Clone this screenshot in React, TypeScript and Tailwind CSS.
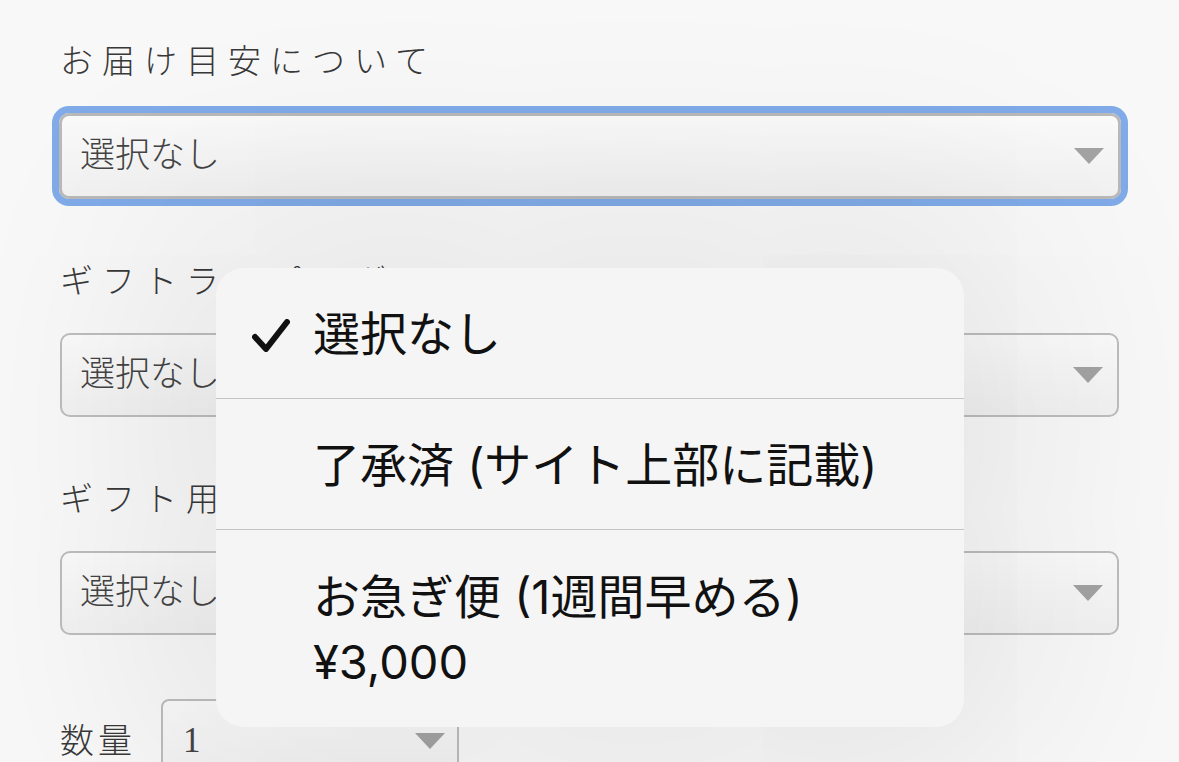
import React from 'react';

const serif = { fontFamily: '"Liberation Serif", "Noto Sans CJK JP", serif' };
const sans = { fontFamily: 'Inter, "Noto Sans CJK JP", sans-serif' };

const Arrow: React.FC = () => (
  <svg width="30" height="16" viewBox="0 0 30 16" className="shrink-0">
    <polygon points="0,0 30,0 15,16" fill="#a3a3a3" />
  </svg>
);

const SelectBox: React.FC<{ value: string; focused?: boolean; className?: string }> = ({ value, focused, className = '' }) => (
  <div
    className={`flex items-center justify-between rounded-[10px] bg-gradient-to-b from-[#fafafa] to-[#f1f1f1] pl-[18px] pr-[14px] ${
      focused ? 'h-[86px] border-[3px] border-[#b9b9b9] ring-[7px] ring-[#80abe8]' : 'h-[84px] border-2 border-[#bdbdbd]'
    } ${className}`}
  >
    <span className="text-[35px] font-light text-[#444]" style={serif}>
      {value}
    </span>
    <Arrow />
  </div>
);

const Label: React.FC<{ children: React.ReactNode }> = ({ children }) => (
  <div className="flex h-[40px] items-center text-[33px] font-light tracking-[9px] text-[#383838]" style={serif}>
    {children}
  </div>
);

export default function App() {
  const options = [
    { label: '選択なし', checked: true, h: 'h-[130px]' },
    { label: '了承済 (サイト上部に記載)', h: 'h-[131px]' },
    { label: 'お急ぎ便 (1週間早める)', sub: '¥3,000', h: 'h-[198px]' },
  ];

  return (
    <div className="relative h-[762px] w-[1179px] overflow-hidden bg-[#f8f8f8]">
      <div className="flex flex-col px-[60px] pt-[43px]">
        <Label>お届け目安について</Label>
        <SelectBox value="選択なし" focused className="mt-[30px] -ml-[1px] mr-[-2px]" />

        <div className="mt-[64px]">
          <Label>ギフトラッピング</Label>
        </div>
        <SelectBox value="選択なし" className="mt-[30px]" />

        <div className="mt-[64px]">
          <Label>ギフト用紙袋</Label>
        </div>
        <SelectBox value="選択なし" className="mt-[30px]" />

        <div className="mt-[64px] flex items-center gap-[25px]">
          <span className="text-[34px] font-light tracking-[4px] text-[#383838]" style={serif}>
            数量
          </span>
          <div className="flex h-[84px] w-[298px] items-center justify-between rounded-[8px] border-2 border-[#bdbdbd] bg-gradient-to-b from-[#fafafa] to-[#f1f1f1] pl-[20px] pr-[12px]">
            <span className="text-[35px] text-[#444]" style={serif}>
              1
            </span>
            <Arrow />
          </div>
        </div>
      </div>

      {/* popup menu */}
      <div
        className="absolute left-[216px] top-[268px] flex w-[748px] flex-col overflow-hidden rounded-[28px] bg-[#f5f5f5] shadow-[0_0_220px_70px_rgba(0,0,0,0.08)]"
        style={sans}
      >
        {options.map((o, i) => (
          <div
            key={i}
            className={`relative flex items-center pl-[97px] ${o.h} ${i > 0 ? 'border-t border-[#c4c4c4]' : ''}`}
          >
            {o.checked && (
              <svg width="38" height="33" viewBox="0 0 38 33" className="absolute top-[51px]" style={{ left: 36 }}>
                <path d="M3 18 L14 30 L35 3" fill="none" stroke="#111" strokeWidth="6" strokeLinecap="round" strokeLinejoin="round" />
              </svg>
            )}
            <div className="text-[47px] leading-[65px] text-[#111]">
              <div>{o.label}</div>
              {o.sub && <div>{o.sub}</div>}
            </div>
          </div>
        ))}
      </div>
    </div>
  );
}
